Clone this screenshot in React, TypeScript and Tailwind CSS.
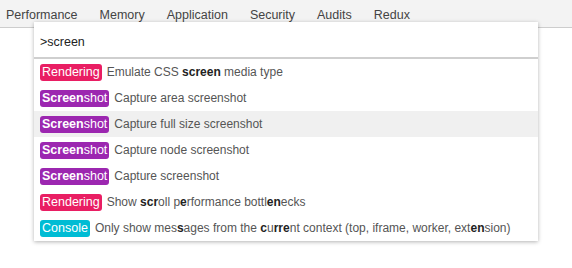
const tabs = ["Performance", "Memory", "Application", "Security", "Audits", "Redux"];

type Part = [string, boolean];
type Item = { tagParts: Part[]; color: string; parts: Part[] };

const shot: Part[] = [["Screen", true], ["shot", false]];

const items: Item[] = [
  {
    tagParts: [["Rendering", false]],
    color: "bg-[#e91e63]",
    parts: [["Emulate CSS ", false], ["screen", true], [" media type", false]],
  },
  { tagParts: shot, color: "bg-[#9c27b0]", parts: [["Capture area screenshot", false]] },
  { tagParts: shot, color: "bg-[#9c27b0]", parts: [["Capture full size screenshot", false]] },
  { tagParts: shot, color: "bg-[#9c27b0]", parts: [["Capture node screenshot", false]] },
  { tagParts: shot, color: "bg-[#9c27b0]", parts: [["Capture screenshot", false]] },
  {
    tagParts: [["Rendering", false]],
    color: "bg-[#e91e63]",
    parts: [
      ["Show ", false],
      ["scr", true],
      ["oll p", false],
      ["e", true],
      ["rformance bottl", false],
      ["en", true],
      ["ecks", false],
    ],
  },
  {
    tagParts: [["Console", false]],
    color: "bg-[#00bcd4]",
    parts: [
      ["Only show mes", false],
      ["s", true],
      ["ages from the ", false],
      ["c", true],
      ["u", false],
      ["rre", true],
      ["nt context (top, iframe, worker, ext", false],
      ["en", true],
      ["sion)", false],
    ],
  },
];

export default function App() {
  return (
    <div className="w-[572px] h-[268px] bg-white font-['Liberation_Sans',Arial,sans-serif] text-[#333] overflow-hidden relative">
      {/* Tab strip */}
      <div className="h-[28px] bg-[#f3f3f3] border-b border-[#cdcdcd] flex items-center pt-[3px] pl-[6px] gap-[22px] text-[12.5px] text-[#444]">
        {tabs.map((t) => (
          <span key={t}>{t}</span>
        ))}
      </div>

      {/* Command palette */}
      <div className="absolute left-[34px] top-[22px] w-[504px] bg-white shadow-[0_1px_4px_rgba(0,0,0,0.3)]">
        <div className="h-[35px] flex items-center pt-[5px] pl-[6px] text-[12.5px] text-[#222]">&gt;screen</div>
        <div className="h-[2px] bg-[#cfcfcf]" />
        <div>
          {items.map((it, i) => (
            <div
              key={i}
              className={`h-[26px] flex items-center pl-[6px] text-[12px] text-[#555] ${i === 2 ? "bg-[#f0f0f0]" : ""}`}
            >
              <span className={`${it.color} text-white rounded-[3px] px-[2px] h-[17px] leading-[17px] mr-[5px] text-[12.5px]`}>
                {it.tagParts.map(([s, b], j) => (
                  <span key={j} className={b ? "font-bold" : ""}>
                    {s}
                  </span>
                ))}
              </span>
              <span className="whitespace-pre">
                {it.parts.map(([s, b], j) => (
                  <span key={j} className={b ? "font-bold text-[#222]" : ""}>
                    {s}
                  </span>
                ))}
              </span>
            </div>
          ))}
        </div>
      </div>
    </div>
  );
}
